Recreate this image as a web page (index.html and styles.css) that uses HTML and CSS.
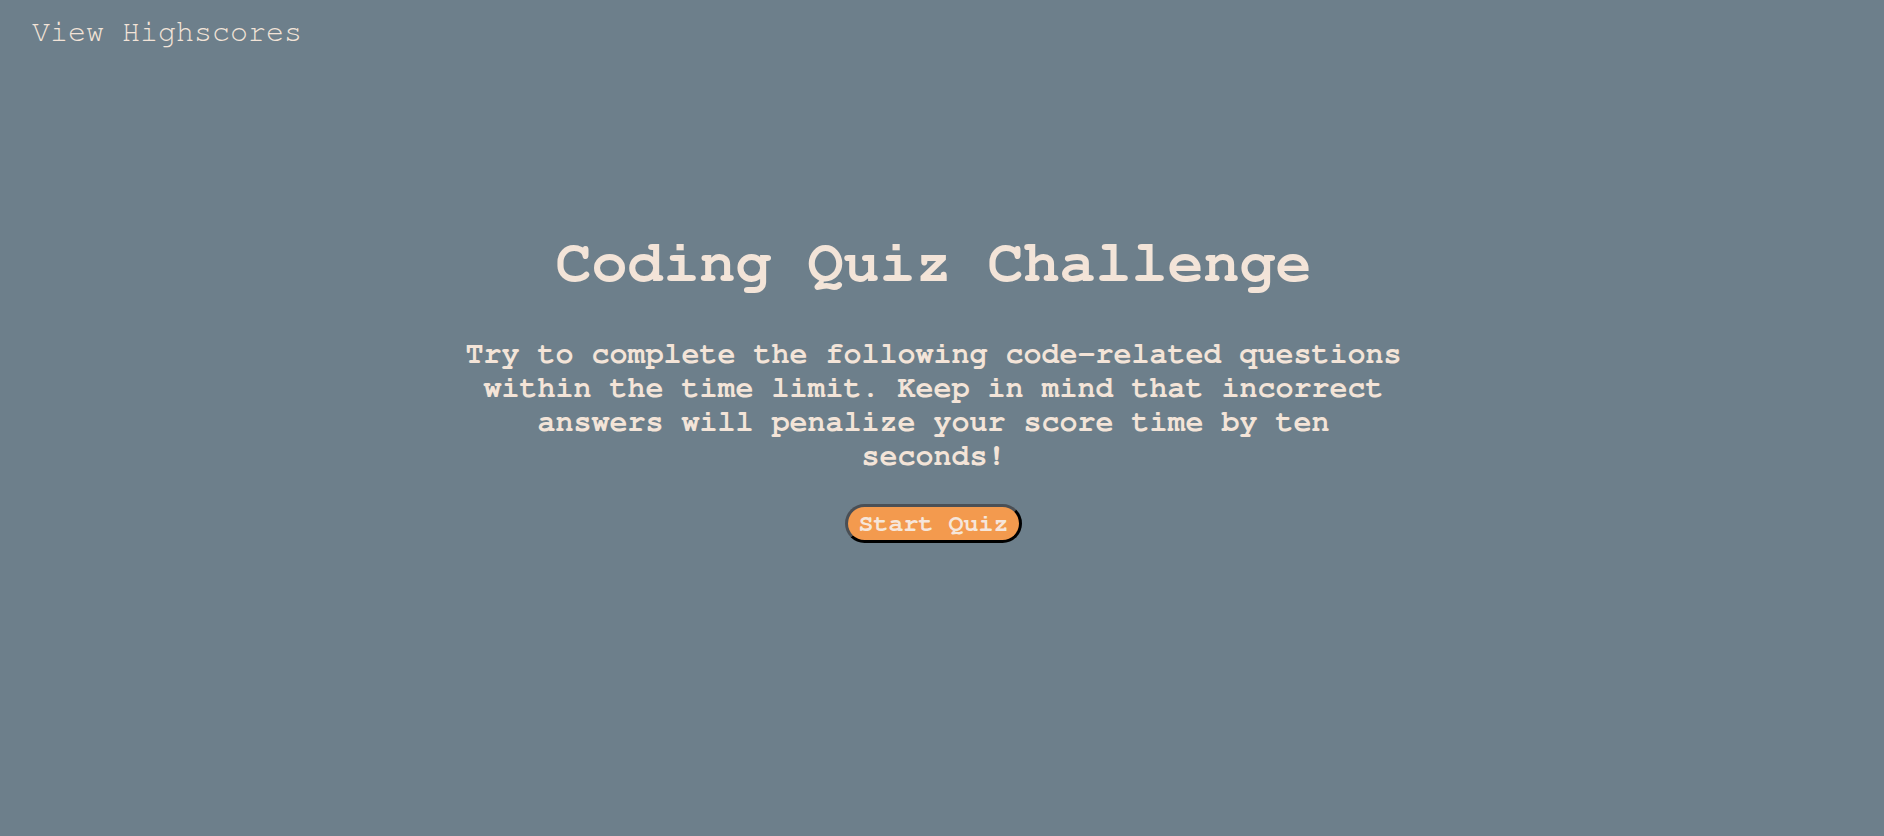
FILE: index.html
```html
<!DOCTYPE html>
<html lang="en">
<head>
<meta charset="utf-8">
<title>Coding Quiz Challenge</title>
<link rel="stylesheet" href="styles.css">
</head>
<body>
<header class="top-bar">
  <a class="highscores-link" href="#">View Highscores</a>
</header>
<main class="intro">
  <h1 class="intro-title">Coding Quiz Challenge</h1>
  <p class="intro-text">Try to complete the following code-related questions within the time limit. Keep in mind that incorrect answers will penalize your score time by ten seconds!</p>
  <button class="start-btn" type="button">Start Quiz</button>
</main>
</body>
</html>
```
FILE: styles.css
```css
html, body {
  margin: 0;
  padding: 0;
}
body {
  background: #6d7f8b;
  color: #f3e4d8;
  font-family: "FreeMono", "Liberation Mono", "Courier New", monospace;
  height: 836px;
  overflow: hidden;
}
.top-bar {
  padding: 15px 0 0 32px;
}
.highscores-link {
  color: #f3e4d8;
  text-decoration: none;
  font-size: 30px;
  line-height: 34px;
}
.intro {
  display: flex;
  flex-direction: column;
  align-items: center;
  padding: 179px 17px 0 0;
  text-align: center;
}
.intro-title {
  margin: 0;
  font-size: 60px;
  line-height: 70px;
  font-weight: bold;
}
.intro-text {
  margin: 39px 0 0;
  width: 945px;
  font-size: 30px;
  line-height: 34px;
  font-weight: bold;
}
.start-btn {
  margin-top: 31px;
  background: #f39a4e;
  color: #f6e6da;
  font-family: "FreeMono", "Liberation Mono", "Courier New", monospace;
  font-size: 25px;
  font-weight: bold;
  line-height: 29px;
  padding: 2px 10px;
  border: 3px solid;
  border-color: #4a4f55 #000 #000 #4a4f55;
  border-radius: 20px;
}
```
